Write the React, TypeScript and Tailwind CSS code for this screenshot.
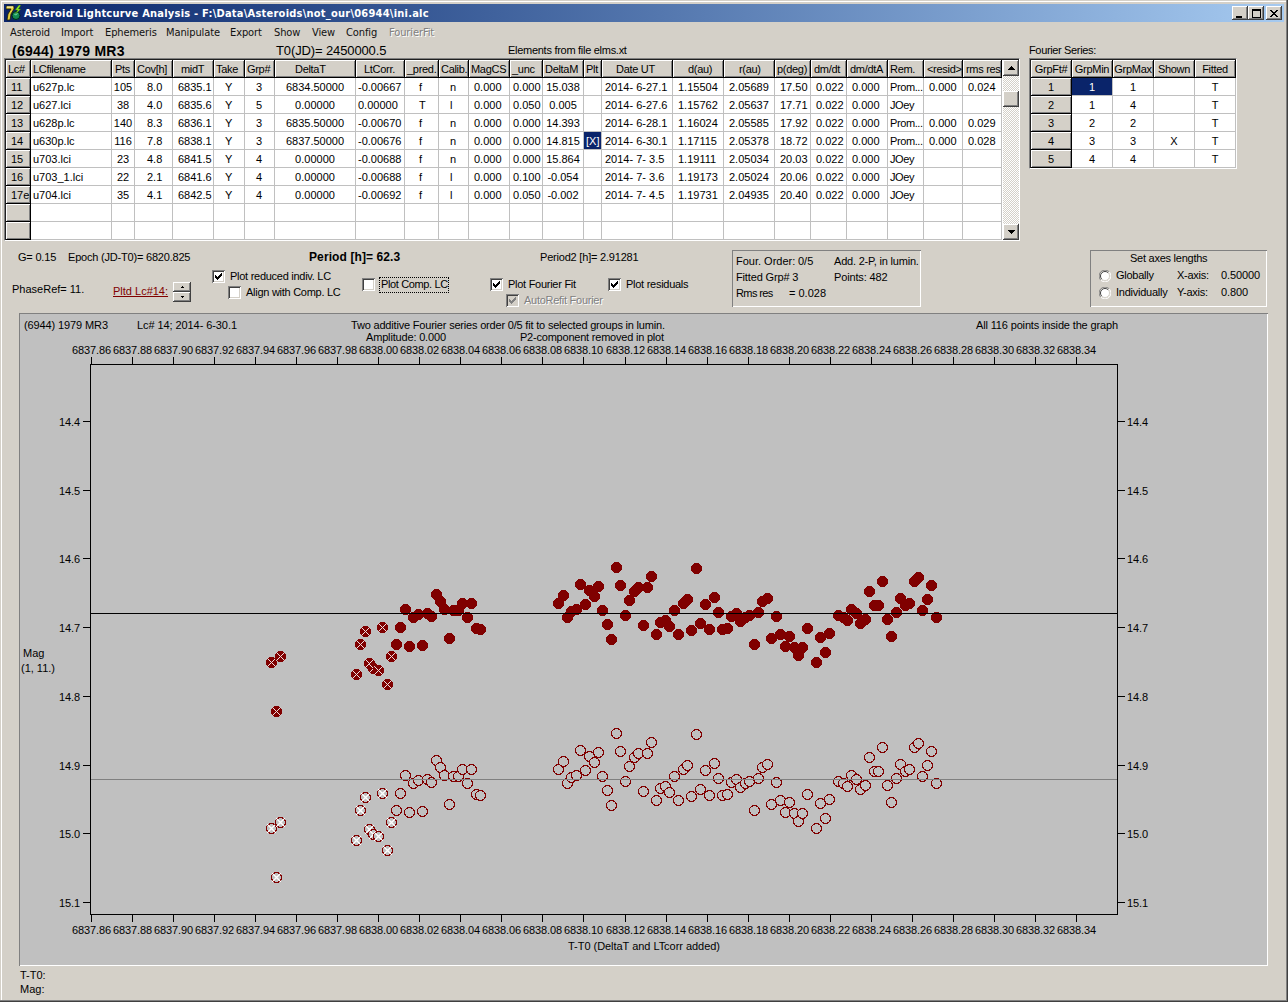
import type { ReactNode } from "react"
import { clsx } from "clsx"

const FONT = "font-['Liberation_Sans',Arial,sans-serif]"
const UI_FONT = "font-['DejaVu_Sans_Condensed','DejaVu_Sans',sans-serif]"

const RAISED =
  "bg-[#d4d0c8] shadow-[inset_-1px_-1px_0_#404040,inset_1px_1px_0_#fff,inset_-2px_-2px_0_#808080]"
const SUNKEN_THIN = "shadow-[inset_1px_1px_0_#808080,inset_-1px_-1px_0_#fff]"

type Column = { title: string; width: number; head: number; body: number; center?: boolean }

// head and body are the left text offsets inside a cell
const columns: Column[] = [
  { title: "Lc#", width: 25, head: 2, body: 5 },
  { title: "LCfilename", width: 81, head: 2, body: 2 },
  { title: "Pts", width: 23, head: 3, body: 0, center: true },
  { title: "Cov[h]", width: 38, head: 2, body: 12 },
  { title: "midT", width: 41, head: 8, body: 5 },
  { title: "Take", width: 31, head: 2, body: 11 },
  { title: "Grp#", width: 30, head: 2, body: 11 },
  { title: "DeltaT", width: 81, head: 20, body: 0, center: true },
  { title: "LtCorr.", width: 49, head: 8, body: 2 },
  { title: "_pred.", width: 34, head: 2, body: 14 },
  { title: "Calib.", width: 30, head: 2, body: 11 },
  { title: "MagCS", width: 41, head: 2, body: 5 },
  { title: "_unc", width: 33, head: 2, body: 3 },
  { title: "DeltaM", width: 41, head: 2, body: 0, center: true },
  { title: "Plt", width: 18, head: 2, body: 2 },
  { title: "Date UT", width: 71, head: 14, body: 3 },
  { title: "d(au)", width: 51, head: 15, body: 5 },
  { title: "r(au)", width: 51, head: 15, body: 5 },
  { title: "p(deg)", width: 36, head: 2, body: 5 },
  { title: "dm/dt", width: 36, head: 3, body: 5 },
  { title: "dm/dtA", width: 41, head: 3, body: 5 },
  { title: "Rem.", width: 36, head: 2, body: 2 },
  { title: "<resid>", width: 39, head: 3, body: 5 },
  { title: "rms res", width: 39, head: 3, body: 5 },
]

const rows: string[][] = [
  ["11", "u627p.lc", "105", "8.0", "6835.1", "Y", "3", "6834.50000", "-0.00667", "f", "n", "0.000", "0.000", "15.038", "", "2014- 6-27.1", "1.15504", "2.05689", "17.50", "0.022", "0.000", "Prom...", "0.000", "0.024"],
  ["12", "u627.lci", "38", "4.0", "6835.6", "Y", "5", "0.00000", "0.00000", "T", "l", "0.000", "0.050", "0.005", "", "2014- 6-27.6", "1.15762", "2.05637", "17.71", "0.022", "0.000", "JOey", "", ""],
  ["13", "u628p.lc", "140", "8.3", "6836.1", "Y", "3", "6835.50000", "-0.00670", "f", "n", "0.000", "0.000", "14.393", "", "2014- 6-28.1", "1.16024", "2.05585", "17.92", "0.022", "0.000", "Prom...", "0.000", "0.029"],
  ["14", "u630p.lc", "116", "7.8", "6838.1", "Y", "3", "6837.50000", "-0.00676", "f", "n", "0.000", "0.000", "14.815", "[X]", "2014- 6-30.1", "1.17115", "2.05378", "18.72", "0.022", "0.000", "Prom...", "0.000", "0.028"],
  ["15", "u703.lci", "23", "4.8", "6841.5", "Y", "4", "0.00000", "-0.00688", "f", "n", "0.000", "0.000", "15.864", "", "2014- 7- 3.5", "1.19111", "2.05034", "20.03", "0.022", "0.000", "JOey", "", ""],
  ["16", "u703_1.lci", "22", "2.1", "6841.6", "Y", "4", "0.00000", "-0.00688", "f", "l", "0.000", "0.100", "-0.054", "", "2014- 7- 3.6", "1.19173", "2.05024", "20.06", "0.022", "0.000", "JOey", "", ""],
  ["17e", "u704.lci", "35", "4.1", "6842.5", "Y", "4", "0.00000", "-0.00692", "f", "l", "0.000", "0.050", "-0.002", "", "2014- 7- 4.5", "1.19731", "2.04935", "20.40", "0.022", "0.000", "JOey", "", ""],
  [],
  [],
]

const fourierColumns: Column[] = ["GrpFt#", "GrpMin", "GrpMax", "Shown", "Fitted"].map((title) => ({
  title,
  width: 41,
  head: 0,
  body: 0,
  center: true,
}))

const fourierRows: string[][] = [
  ["1", "1", "1", "", "T"],
  ["2", "1", "4", "", "T"],
  ["3", "2", "2", "", "T"],
  ["4", "3", "3", "X", "T"],
  ["5", "4", "4", "", "T"],
]

const menuItems = [
  { title: "Asteroid", width: "w-[51px]" },
  { title: "Import", width: "w-[44px]" },
  { title: "Ephemeris", width: "w-[61px]" },
  { title: "Manipulate", width: "w-[64px]" },
  { title: "Export", width: "w-[44px]" },
  { title: "Show", width: "w-[38px]" },
  { title: "View", width: "w-[34px]" },
  { title: "Config", width: "w-[43px]" },
]

// plain points of the night, [x, y] on the canvas
const points: [number, number][] = [
  [396, 644], [400, 627], [405, 609], [409, 646], [413, 617], [418, 614], [422, 645], [427, 613],
  [431, 616], [436, 594], [440, 601], [444, 609], [449, 638], [453, 610], [458, 610], [462, 603],
  [467, 617], [471, 603], [476, 628], [480, 629], [558, 603], [563, 595], [567, 617], [571, 611],
  [576, 609], [580, 584], [585, 604], [589, 590], [594, 596], [598, 586], [602, 610], [607, 624],
  [611, 639], [616, 567], [620, 585], [625, 615], [629, 600], [634, 591], [638, 587], [643, 625],
  [647, 587], [651, 576], [656, 634], [660, 622], [665, 620], [669, 626], [674, 610], [678, 634],
  [683, 603], [687, 599], [691, 630], [696, 568], [700, 623], [705, 604], [709, 629], [714, 597],
  [718, 612], [722, 629], [727, 628], [731, 616], [736, 613], [740, 621], [745, 617], [749, 615],
  [754, 644], [758, 612], [762, 601], [767, 598], [771, 638], [776, 616], [780, 634], [785, 646],
  [789, 636], [794, 647], [798, 655], [802, 647], [807, 628], [816, 662], [820, 637], [825, 652],
  [829, 633], [838, 615], [843, 617], [847, 620], [851, 609], [856, 613], [860, 623], [865, 619],
  [869, 591], [874, 605], [878, 605], [882, 581], [887, 619], [891, 636], [896, 612], [900, 598],
  [905, 605], [909, 603], [914, 581], [918, 577], [922, 610], [927, 599], [931, 585], [936, 617],
]

const crossedPoints: [number, number][] = [
  [271, 662], [276, 711], [280, 656], [356, 674], [360, 644], [365, 631],
  [369, 663], [373, 668], [378, 670], [382, 627], [387, 684], [391, 656],
]

const RESIDUAL_OFFSET = 166

const xTicks = Array.from({ length: 25 }, (_, i) => ({
  x: 91 + Math.round(i * 41.04),
  label: (6837.86 + i * 0.02).toFixed(2),
}))

const yTicks = Array.from({ length: 8 }, (_, i) => ({
  y: 421 + Math.round(i * 68.72),
  label: (14.4 + i * 0.1).toFixed(1),
}))

function Grid({
  columns,
  rows,
  selected,
}: {
  columns: Column[]
  rows: string[][]
  selected: [number, number]
}) {
  const fixedCell = "bg-[#d4d0c8] shadow-[inset_1px_1px_0_#fff,inset_-1px_-1px_0_#808080]"
  return (
    <div>
      <div className="flex h-[18px] tracking-[-0.3px]">
        {columns.map((col, c) => (
          <div
            key={c}
            className={clsx(
              "h-[18px] shrink-0 overflow-hidden border-r border-b border-black pt-[3px] leading-[13px] whitespace-nowrap",
              fixedCell,
              col.center && col.head === 0 && "flex justify-center",
            )}
            style={{ width: col.width, paddingLeft: col.head }}
          >
            {col.title}
          </div>
        ))}
      </div>
      {rows.map((row, r) => (
        <div key={r} className="flex h-[18px]">
          {columns.map((col, c) => {
            const isSelected = selected[0] === r && selected[1] === c
            return (
              <div
                key={c}
                className={clsx(
                  "h-[18px] shrink-0 overflow-hidden border-r border-b pt-[3px] leading-[13px] whitespace-nowrap",
                  c === 0 ? ["border-black", fixedCell] : "border-[#c0c0c0]",
                  c > 0 && (isSelected ? "bg-[#0a246a] text-white" : "bg-white"),
                  col.center && "flex justify-center",
                  col.title === "Rem." && "tracking-[-0.4px]",
                )}
                style={{ width: col.width, paddingLeft: col.body }}
              >
                {row[c]}
              </div>
            )
          })}
        </div>
      ))}
    </div>
  )
}

function Sunken({ className, children }: { className?: string; children: ReactNode }) {
  return (
    <div
      className={clsx(
        "flex border border-t-[#808080] border-r-white border-b-white border-l-[#808080] bg-white pt-px pl-px shadow-[inset_1px_1px_0_#202020]",
        className,
      )}
    >
      {children}
    </div>
  )
}

function ScrollBar() {
  return (
    <div className="ml-px flex h-[180px] w-4 flex-col bg-[repeating-conic-gradient(#fff_0_25%,#d4d0c8_0_50%)] bg-size-[2px_2px]">
      <div className={clsx("flex h-4 items-center justify-center", RAISED)}>
        <svg width="7" height="4" shapeRendering="crispEdges">
          <path d="M3 0h1v1h-1zM2 1h3v1h-3zM1 2h5v1h-5zM0 3h7v1h-7z" />
        </svg>
      </div>
      <div className={clsx("mt-[15px] h-4", RAISED)} />
      <div className={clsx("mt-auto flex h-4 items-center justify-center", RAISED)}>
        <svg width="7" height="4" shapeRendering="crispEdges">
          <path d="M0 0h7v1h-7zM1 1h5v1h-5zM2 2h3v1h-3zM3 3h1v1h-1z" />
        </svg>
      </div>
    </div>
  )
}

function CheckBox({
  label,
  checked,
  disabled,
  focused,
  className,
}: {
  label: string
  checked?: boolean
  disabled?: boolean
  focused?: boolean
  className?: string
}) {
  return (
    <div className={clsx("flex h-[13px] items-center", className)}>
      <div
        className={clsx(
          "flex size-[13px] shrink-0 items-center justify-center shadow-[inset_1px_1px_0_#808080,inset_-1px_-1px_0_#fff,inset_2px_2px_0_#404040,inset_-2px_-2px_0_#d4d0c8]",
          disabled ? "bg-[#d4d0c8]" : "bg-white",
        )}
      >
        {checked && (
          <svg width="7" height="7" shapeRendering="crispEdges">
            <path
              d="M0 2h1v3h-1zM1 3h1v3h-1zM2 4h1v3h-1zM3 3h1v3h-1zM4 2h1v3h-1zM5 1h1v3h-1zM6 0h1v3h-1z"
              fill={disabled ? "#808080" : "#000"}
            />
          </svg>
        )}
      </div>
      <span
        className={clsx(
          "leading-[13px] tracking-[-0.27px] whitespace-nowrap",
          focused ? "ml-1 h-[16px] w-[70px] border border-dotted border-black pl-px tracking-[-0.37px]" : "ml-[5px]",
          disabled && "text-[#808080] [text-shadow:1px_1px_0_#fff]",
        )}
      >
        {label}
      </span>
    </div>
  )
}

function Radio() {
  return (
    <svg width="12" height="12" viewBox="0 0 12 12">
      <circle cx="6" cy="6" r="5" fill="#fff" />
      <path d="M1.8 10.2A5.5 5.5 0 0 1 10.2 1.8" fill="none" stroke="#808080" />
      <path d="M2.8 9.2A4.5 4.5 0 0 1 9.2 2.8" fill="none" stroke="#404040" />
      <path d="M10.2 1.8A5.5 5.5 0 0 1 1.8 10.2" fill="none" stroke="#fff" />
      <path d="M9.2 2.8A4.5 4.5 0 0 1 2.8 9.2" fill="none" stroke="#d4d0c8" />
    </svg>
  )
}

function AppIcon() {
  return (
    <svg width="16" height="16" viewBox="0 0 16 16">
      <path d="M0 1h8v3L5 9l-1 6H1l1-6 3-5H0z" fill="#e8d040" stroke="#202000" strokeWidth="0.8" />
      <path d="M1 2h6" stroke="#fffbd0" />
      <circle cx="10" cy="10.500" r="4" fill="#138a52" stroke="#002818" strokeWidth="1" />
      <path d="M8 9.500l2-2 2 1-2 2z" fill="#5fd6a0" />
      <path d="M13 0l-4 5h2.500L9.500 9 15 4h-2.500L15 0z" fill="#90f020" stroke="#205010" strokeWidth="0.500" />
    </svg>
  )
}

function TitleBar() {
  const button = clsx("flex h-[14px] w-4 items-center justify-center", RAISED)
  return (
    <div className="flex h-[18px] items-center bg-linear-to-r from-[#0a246a] to-[#a6caf0] pr-[2px] pl-[2px]">
      <AppIcon />
      <span
        className={clsx(
          "mt-px ml-[2px] text-[11px] leading-[14px] font-bold tracking-[0.23px] whitespace-nowrap text-white",
          UI_FONT,
        )}
      >
        Asteroid Lightcurve Analysis - F:\Data\Asteroids\not_our\06944\ini.alc
      </span>
      <div className="ml-auto flex">
        <div className={button}>
          <svg width="10" height="9" shapeRendering="crispEdges">
            <path d="M1 7h6v2h-6z" />
          </svg>
        </div>
        <div className={button}>
          <svg width="9" height="9" shapeRendering="crispEdges">
            <path d="M0 0h9v9h-9zM1 2v6h7v-6z" fillRule="evenodd" />
          </svg>
        </div>
        <div className={clsx("ml-[2px]", button)}>
          <svg width="8" height="7" shapeRendering="crispEdges">
            <path d="M0 0h2v1h-2zM6 0h2v1h-2zM1 1h2v1h-2zM5 1h2v1h-2zM2 2h4v1h-4zM3 3h2v1h-2zM2 4h4v1h-4zM1 5h2v1h-2zM5 5h2v1h-2zM0 6h2v1h-2zM6 6h2v1h-2z" />
          </svg>
        </div>
      </div>
    </div>
  )
}

function MenuBar() {
  return (
    <div
      className={clsx(
        "flex h-5 items-center pt-[2px] pl-[6px] text-[11px] tracking-[-0.1px] whitespace-nowrap text-[#111]",
        UI_FONT,
      )}
    >
      {menuItems.map((item) => (
        <span key={item.title} className={clsx("shrink-0", item.width)}>
          {item.title}
        </span>
      ))}
      <span className="text-[#808080] [text-shadow:1px_1px_0_#fff]">FourierFit</span>
    </div>
  )
}

function Controls() {
  return (
    <div className="flex h-[72px] whitespace-nowrap">
      <div className="w-[728px] shrink-0 pt-[9px]">
        <div className="flex h-[14px] leading-[14px] tracking-[-0.2px]">
          <span className="ml-[14px] w-[50px]">G= 0.15</span>
          <span className="w-[241px]">Epoch (JD-T0)= 6820.825</span>
          <span className="w-[231px] text-[12px] font-bold tracking-[0.1px]">Period [h]= 62.3</span>
          <span>Period2 [h]= 2.91281</span>
        </div>
        <div className="flex">
          <div className="flex w-[208px] pt-[18px]">
            <span className="ml-2 w-[101px] leading-[14px]">PhaseRef= 11.</span>
            <span className="mt-[2px] w-[60px] leading-[14px] text-[#800000] underline">Pltd Lc#14:</span>
            <div className="flex flex-col">
              <div className={clsx("flex h-[10px] w-[18px] items-center justify-center", RAISED)}>
                <svg width="3" height="2" shapeRendering="crispEdges">
                  <path d="M1 0h1v1h-1zM0 1h3v1h-3z" />
                </svg>
              </div>
              <div className={clsx("flex h-[10px] w-[18px] items-center justify-center", RAISED)}>
                <svg width="3" height="2" shapeRendering="crispEdges">
                  <path d="M0 0h3v1h-3zM1 1h1v1h-1z" />
                </svg>
              </div>
            </div>
          </div>
          <div className="flex w-[150px] flex-col gap-[3px] pt-[6px]">
            <CheckBox label="Plot reduced indiv. LC" checked />
            <CheckBox label="Align with Comp. LC" className="ml-4" />
          </div>
          <div className="w-[128px] pt-[14px]">
            <CheckBox label="Plot Comp. LC" focused />
          </div>
          <div className="flex w-[118px] flex-col gap-[3px] pt-[14px]">
            <CheckBox label="Plot Fourier Fit" checked />
            <CheckBox label="AutoRefit Fourier" checked disabled className="ml-4" />
          </div>
          <div className="pt-[14px]">
            <CheckBox label="Plot residuals" checked />
          </div>
        </div>
      </div>

      <div className={clsx("mt-[9px] h-[57px] w-[189px] pt-[3px] pl-1 leading-4", SUNKEN_THIN)}>
        <div className="flex">
          <span className="w-[62px]">Four. Order:</span>
          <span className="w-[36px]">0/5</span>
          <span className="tracking-[-0.2px]">Add. 2-P, in lumin.</span>
        </div>
        <div className="flex">
          <span className="w-[98px] tracking-[-0.15px]">Fitted Grp# 3</span>
          <span className="tracking-[-0.15px]">Points: 482</span>
        </div>
        <div className="flex">
          <span className="w-[53px] tracking-[-0.6px]">Rms res</span>
          <span>= 0.028</span>
        </div>
      </div>

      <div
        className={clsx(
          "mt-[9px] ml-[169px] h-[57px] w-[177px] pt-px pl-[9px] tracking-[-0.25px]",
          SUNKEN_THIN,
        )}
      >
        <div className="pl-[31px] leading-[15px]">Set axes lengths</div>
        <div className="mt-px flex h-[17px] items-center">
          <Radio />
          <span className="ml-[5px] w-[61px]">Globally</span>
          <span className="w-11">X-axis:</span>
          <span className="tracking-[-0.1px]">0.50000</span>
        </div>
        <div className="flex h-[17px] items-center">
          <Radio />
          <span className="ml-[5px] w-[61px]">Individually</span>
          <span className="w-11">Y-axis:</span>
          <span className="tracking-[-0.1px]">0.800</span>
        </div>
      </div>
    </div>
  )
}

function Crossed({ x, y, open }: { x: number; y: number; open?: boolean }) {
  return (
    <g>
      <rect x={x - 4} y={y - 4} width="9" height="9" fill={open ? "#fff" : "#d8c8c8"} />
      <circle
        cx={x + 0.5}
        cy={y + 0.5}
        r={open ? 5 : 5.5}
        fill={open ? "#c0c0c0" : "#800000"}
        stroke={open ? "#800000" : "none"}
      />
      <path
        d={`M${x - 3} ${y - 3}l7 7M${x + 4} ${y - 3}l-7 7`}
        stroke={open ? "#fff" : "#f0e0e0"}
        strokeWidth={open ? 1.4 : 1}
        shapeRendering="auto"
      />
    </g>
  )
}

function LightCurve() {
  return (
    <svg
      width="1249"
      height="653"
      viewBox="19 313 1249 653"
      className="ml-[15px] block bg-[#c0c0c0]"
      fontSize="11"
    >
      <g shapeRendering="crispEdges">
        <path d="M19.500 966V313.500H1268" fill="none" stroke="#808080" />
        <path d="M20 965.500H1267.500V314" fill="none" stroke="#fff" />
        <rect x="90.500" y="364.500" width="1027" height="550" fill="none" stroke="#000" />
        {xTicks.map(({ x }) => (
          <path key={x} d={`M${x + 0.5} 357v7M${x + 0.5} 915v7`} stroke="#000" />
        ))}
        {yTicks.map(({ y }) => (
          <path key={y} d={`M83 ${y + 0.5}h7M1118 ${y + 0.5}h7`} stroke="#000" />
        ))}
      </g>

      <g shapeRendering="crispEdges">
        {points.map(([x, y], i) => (
          <circle key={i} cx={x + 0.5} cy={y + 0.5} r="5.500" fill="#800000" />
        ))}
        {crossedPoints.map(([x, y], i) => (
          <Crossed key={i} x={x} y={y} />
        ))}
        {points.map(([x, y], i) => (
          <circle
            key={i}
            cx={x + 0.5}
            cy={y + RESIDUAL_OFFSET + 0.5}
            r="5"
            fill="#c0c0c0"
            stroke="#800000"
          />
        ))}
        {crossedPoints.map(([x, y], i) => (
          <Crossed key={i} x={x} y={y + RESIDUAL_OFFSET} open />
        ))}
        <path d="M91 613.500H1117" stroke="#000" />
        <path d="M91 779.500H1117" stroke="#808080" />
      </g>

      <g>
        <text x="24" y="329" textLength="84">(6944) 1979 MR3</text>
        <text x="137" y="329" textLength="100">Lc# 14; 2014- 6-30.1</text>
        <text x="351" y="329" textLength="314">Two additive Fourier series order 0/5 fit to selected groups in lumin.</text>
        <text x="366" y="341" textLength="80">Amplitude: 0.000</text>
        <text x="520" y="341" textLength="144">P2-component removed in plot</text>
        <text x="976" y="329" textLength="142">All 116 points inside the graph</text>
        {xTicks.map(({ x, label }) => (
          <g key={x}>
            <text x={x - 19} y="354" textLength="39">{label}</text>
            <text x={x - 19} y="934" textLength="39">{label}</text>
          </g>
        ))}
        {yTicks.map(({ y, label }) => (
          <g key={y}>
            <text x="59" y={y + 5} textLength="21">{label}</text>
            <text x="1127" y={y + 5} textLength="21">{label}</text>
          </g>
        ))}
        <text x="23" y="657">Mag</text>
        <text x="21" y="672" textLength="34">(1, 11.)</text>
        <text x="568" y="950" textLength="152">T-T0 (DeltaT and LTcorr added)</text>
      </g>
    </svg>
  )
}

export default function App() {
  return (
    <div
      className={clsx(
        "h-[1002px] w-[1288px] overflow-hidden bg-[#d4d0c8] p-1 text-[11px] text-black shadow-[inset_0_-1px_0_#404040,inset_-1px_0_0_#404040,inset_-2px_-2px_0_#808080,inset_1px_1px_0_#d4d0c8,inset_2px_2px_0_#fff]",
        FONT,
      )}
    >
      <TitleBar />
      <MenuBar />

      <div className="flex h-4 items-center pl-2 whitespace-nowrap">
        <span className="w-[264px] shrink-0 pt-px text-[14px] leading-4 font-bold tracking-[0.25px]">
          (6944) 1979 MR3
        </span>
        <span className="w-[232px] shrink-0 pt-px text-[13px] leading-4 tracking-[-0.12px]">T0(JD)= 2450000.5</span>
        <span className="w-[521px] shrink-0 leading-[14px] tracking-[-0.28px]">Elements from file elms.xt</span>
        <span className="leading-[14px] tracking-[-0.35px]">Fourier Series:</span>
      </div>

      <div className="flex items-start">
        <Sunken className="h-[183px] w-[1016px]">
          <Grid columns={columns} rows={rows} selected={[3, 14]} />
          <ScrollBar />
        </Sunken>
        <Sunken className="ml-[9px] h-[111px] w-[208px]">
          <Grid columns={fourierColumns} rows={fourierRows} selected={[0, 1]} />
        </Sunken>
      </div>

      <Controls />
      <LightCurve />

      <div className="ml-4 pt-[2px] leading-[14px]">
        <div>T-T0:</div>
        <div>Mag:</div>
      </div>
    </div>
  )
}
